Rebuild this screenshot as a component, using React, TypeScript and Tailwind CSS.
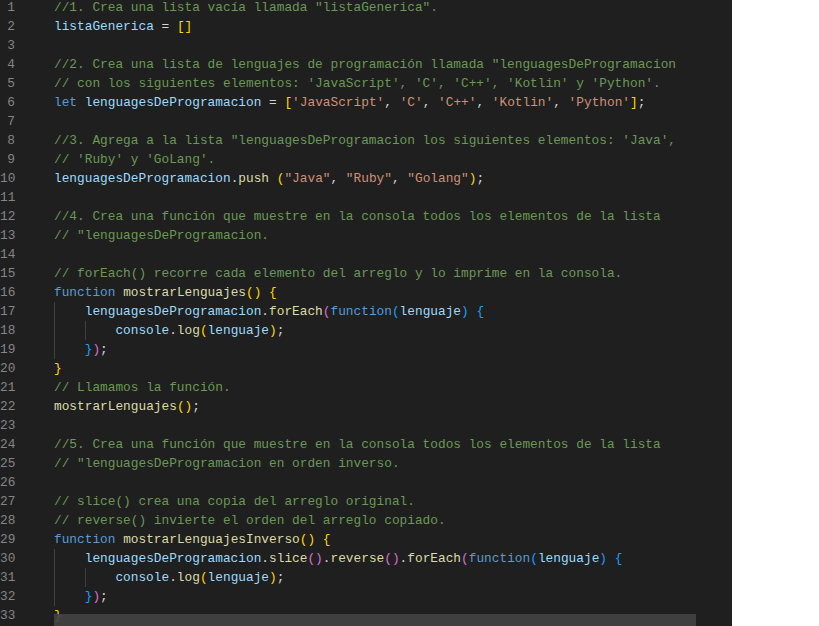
import React from 'react';

type Tok = [string, string];

const C = 'text-[#6a9955]'; // comment
const V = 'text-[#9cdcfe]'; // variable
const K = 'text-[#569cd6]'; // keyword
const F = 'text-[#dcdcaa]'; // function
const S = 'text-[#ce9178]'; // string
const P = 'text-[#d4d4d4]'; // punctuation
const B1 = 'text-[#ffd700]';
const B2 = 'text-[#da70d6]';
const B3 = 'text-[#179fff]';

type Line = { indent: number; toks: Tok[] };

const L = (indent: number, ...toks: Tok[]): Line => ({ indent, toks });

const lines: Line[] = [
  L(0, [C, '//1. Crea una lista vacía llamada "listaGenerica".']),
  L(0, [V, 'listaGenerica'], [P, ' = '], [B1, '[]']),
  L(0),
  L(0, [C, '//2. Crea una lista de lenguajes de programación llamada "lenguagesDeProgramacion']),
  L(0, [C, "// con los siguientes elementos: 'JavaScript', 'C', 'C++', 'Kotlin' y 'Python'."]),
  L(0, [K, 'let'], [P, ' '], [V, 'lenguagesDeProgramacion'], [P, ' = '], [B1, '['], [S, "'JavaScript'"], [P, ', '], [S, "'C'"], [P, ', '], [S, "'C++'"], [P, ', '], [S, "'Kotlin'"], [P, ', '], [S, "'Python'"], [B1, ']'], [P, ';']),
  L(0),
  L(0, [C, "//3. Agrega a la lista \"lenguagesDeProgramacion los siguientes elementos: 'Java',"]),
  L(0, [C, "// 'Ruby' y 'GoLang'."]),
  L(0, [V, 'lenguagesDeProgramacion'], [P, '.'], [F, 'push'], [P, ' '], [B1, '('], [S, '"Java"'], [P, ', '], [S, '"Ruby"'], [P, ', '], [S, '"Golang"'], [B1, ')'], [P, ';']),
  L(0),
  L(0, [C, '//4. Crea una función que muestre en la consola todos los elementos de la lista']),
  L(0, [C, '// "lenguagesDeProgramacion.']),
  L(0),
  L(0, [C, '// forEach() recorre cada elemento del arreglo y lo imprime en la consola.']),
  L(0, [K, 'function'], [P, ' '], [F, 'mostrarLenguajes'], [B1, '()'], [P, ' '], [B1, '{']),
  L(1, [V, 'lenguagesDeProgramacion'], [P, '.'], [F, 'forEach'], [B2, '('], [K, 'function'], [B3, '('], [V, 'lenguaje'], [B3, ')'], [P, ' '], [B3, '{']),
  L(2, [V, 'console'], [P, '.'], [F, 'log'], [B1, '('], [V, 'lenguaje'], [B1, ')'], [P, ';']),
  L(1, [B3, '}'], [B2, ')'], [P, ';']),
  L(0, [B1, '}']),
  L(0, [C, '// Llamamos la función.']),
  L(0, [F, 'mostrarLenguajes'], [B1, '()'], [P, ';']),
  L(0),
  L(0, [C, '//5. Crea una función que muestre en la consola todos los elementos de la lista']),
  L(0, [C, '// "lenguagesDeProgramacion en orden inverso.']),
  L(0),
  L(0, [C, '// slice() crea una copia del arreglo original.']),
  L(0, [C, '// reverse() invierte el orden del arreglo copiado.']),
  L(0, [K, 'function'], [P, ' '], [F, 'mostrarLenguajesInverso'], [B1, '()'], [P, ' '], [B1, '{']),
  L(1, [V, 'lenguagesDeProgramacion'], [P, '.'], [F, 'slice'], [B2, '()'], [P, '.'], [F, 'reverse'], [B2, '()'], [P, '.'], [F, 'forEach'], [B2, '('], [K, 'function'], [B3, '('], [V, 'lenguaje'], [B3, ')'], [P, ' '], [B3, '{']),
  L(2, [V, 'console'], [P, '.'], [F, 'log'], [B1, '('], [V, 'lenguaje'], [B1, ')'], [P, ';']),
  L(1, [B3, '}'], [B2, ')'], [P, ';']),
  L(0, [B1, '}']),
];

const App: React.FC = () => {
  return (
    <div className="w-[819px] h-[626px] bg-white flex overflow-hidden">
      <div className="relative w-[732px] h-full bg-[#1f1f1f] overflow-hidden font-['Liberation_Mono',monospace] text-[12.8px] leading-[19px]">
        <div className="-mt-[2px]">
          {lines.map((line, i) => (
            <div key={i} className="flex h-[19px]">
              <div className="w-[15px] text-right text-[#858585] shrink-0">{i + 1}</div>
              <div className="ml-[39px] whitespace-pre">
                {Array.from({ length: line.indent }).map((_, j) => (
                  <span key={j} className="inline-block w-[4ch] h-[19px] align-top border-l border-[#404040]" />
                ))}
                {line.toks.map(([cls, text], j) => (
                  <span key={j} className={cls}>{text}</span>
                ))}
              </div>
            </div>
          ))}
        </div>
        {/* horizontal scrollbar */}
        <div className="absolute left-[54px] top-[614px] w-[642px] h-[12px] bg-[#434343]/90" />
      </div>
    </div>
  );
};

export default App;
